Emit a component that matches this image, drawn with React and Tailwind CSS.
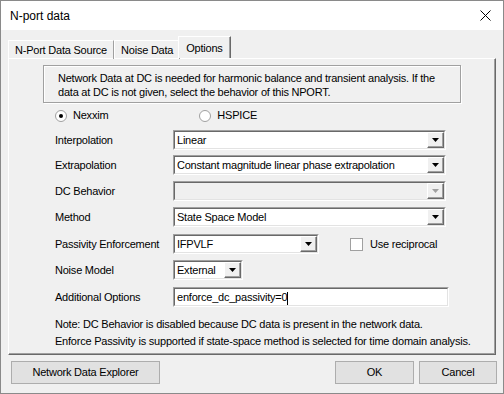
import React from 'react';

const font = { fontFamily: '"Liberation Sans", Arial, sans-serif' };

function Arrow({ disabled }) {
  return (
    <div className="h-full w-[17px] bg-[#f0f0f0] border border-t-white border-l-white border-r-[#696969] border-b-[#696969] shadow-[inset_-1px_-1px_0_#a0a0a0] flex items-center justify-center">
      <svg width="7" height="4" viewBox="0 0 7 4">
        <path d="M0 0H7L3.5 4Z" fill={disabled ? '#a0a0a0' : '#000'} />
      </svg>
    </div>
  );
}

function Combo({ value, width, disabled }) {
  return (
    <div
      className={`h-[20px] flex items-stretch border border-t-[#a0a0a0] border-l-[#a0a0a0] border-r-white border-b-white ${disabled ? 'bg-[#f0f0f0]' : 'bg-white'}`}
      style={{ width }}
    >
      <div className="flex-1 flex items-stretch border border-t-[#696969] border-l-[#696969] border-r-[#e3e3e3] border-b-[#e3e3e3]">
        <div className="flex-1 pl-[2px] leading-[16px] whitespace-nowrap overflow-hidden">{value}</div>
        <Arrow disabled={disabled} />
      </div>
    </div>
  );
}

function Row({ label, children, mt }) {
  return (
    <div className="flex items-center" style={{ marginTop: mt }}>
      <div className="w-[118px] whitespace-nowrap">{label}</div>
      {children}
    </div>
  );
}

function Button({ children, className }) {
  return (
    <div className={`h-[23px] flex items-center justify-center bg-[#e1e1e1] border border-[#adadad] ${className}`}>
      {children}
    </div>
  );
}

export default function App() {
  return (
    <div className="w-[504px] h-[394px] bg-[#f0f0f0] border border-[#8a8a8a] text-[11px] tracking-[-0.22px] text-black overflow-hidden whitespace-nowrap" style={font}>
      <div className="h-[29px] bg-white flex items-center justify-between pl-[9px] pr-[12px]">
        <span className="text-[12px] tracking-normal">N-port data</span>
        <svg width="11" height="11" viewBox="0 0 11 11">
          <path d="M0.5 0.5L10.5 10.5M10.5 0.5L0.5 10.5" stroke="#000" strokeWidth="1" />
        </svg>
      </div>

      <div className="pt-[7px] px-[7px]">
        <div className="flex items-end h-[21px]">
          <div className="h-[19px] px-[6px] flex items-center border-t border-l border-white border-r border-r-[#a0a0a0] -mb-[1px]">N-Port Data Source</div>
          <div className="h-[19px] px-[6px] flex items-center border-t border-l border-white border-r border-r-[#a0a0a0] -mb-[1px]">Noise Data</div>
          <div className="h-[22px] px-[7px] -ml-[2px] flex items-start pt-[3px] border-t border-l border-white border-r border-r-[#696969] bg-[#f0f0f0] relative z-10 shadow-[inset_-1px_0_0_#a0a0a0]">Options</div>
        </div>
        <div className="h-[297px] border border-t-white border-l-white border-r-[#696969] border-b-[#696969] shadow-[inset_-1px_-1px_0_#a0a0a0]">
          <div className="ml-[34px] mt-[6px] w-[418px] h-[38px] border border-[#a0a0a0] shadow-[1px_1px_0_#fff,inset_1px_1px_0_#fff] pl-[14px] pt-[5px] leading-[14px]">
            <div>Network Data at DC is needed for harmonic balance and transient analysis. If the</div>
            <div>data at DC is not given, select the behavior of this NPORT.</div>
          </div>

          <div className="pl-[46px]">
            <div className="flex items-center mt-[6px] h-[13px]">
              <div className="w-[12px] h-[12px] rounded-full bg-white border border-[#a0a0a0] flex items-center justify-center">
                <div className="w-[4px] h-[4px] rounded-full bg-black" />
              </div>
              <span className="ml-[6px]">Nexxim</span>
              <div className="ml-[91px] w-[12px] h-[12px] rounded-full bg-white border border-[#a0a0a0]" />
              <span className="ml-[6px]">HSPICE</span>
            </div>

            <Row label="Interpolation" mt="8px"><Combo value="Linear" width="273px" /></Row>
            <Row label="Extrapolation" mt="5px"><Combo value="Constant magnitude linear phase extrapolation" width="273px" /></Row>
            <Row label="DC Behavior" mt="6px"><Combo value="" width="273px" disabled /></Row>
            <Row label="Method" mt="6px"><Combo value="State Space Model" width="273px" /></Row>
            <Row label="Passivity Enforcement" mt="7px">
              <Combo value="IFPVLF" width="146px" />
              <div className="ml-[31px] w-[13px] h-[13px] bg-white border border-[#a0a0a0]" />
              <span className="ml-[7px]">Use reciprocal</span>
            </Row>
            <Row label="Noise Model" mt="6px"><Combo value="External" width="70px" /></Row>
            <Row label="Additional Options" mt="7px">
              <div className="w-[276px] h-[20px] bg-white border border-t-[#a0a0a0] border-l-[#a0a0a0] border-r-white border-b-white">
                <div className="h-full border border-t-[#696969] border-l-[#696969] border-r-[#e3e3e3] border-b-[#e3e3e3] pl-[2px] leading-[16px]">
                  enforce_dc_passivity=0<span className="inline-block w-[1px] h-[13px] bg-black align-middle" />
                </div>
              </div>
            </Row>
            <div className="mt-[9px] leading-[17px]">
              <div>Note: DC Behavior is disabled because DC data is present in the network data.</div>
              <div>Enforce Passivity is supported if state-space method is selected for time domain analysis.</div>
            </div>
          </div>
        </div>

        <div className="flex items-center mt-[6px]">
          <Button className="w-[149px] ml-[3px]">Network Data Explorer</Button>
          <div className="flex-1" />
          <Button className="w-[79px]">OK</Button>
          <Button className="w-[78px] ml-[5px] -mr-[1px]">Cancel</Button>
        </div>
      </div>
    </div>
  );
}
